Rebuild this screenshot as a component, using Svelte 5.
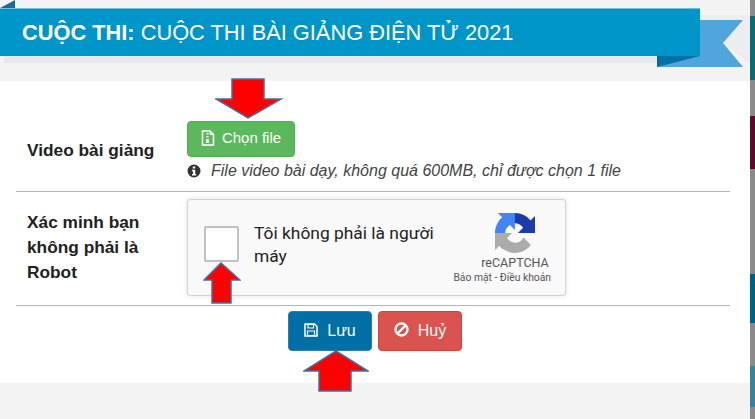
<script lang="ts">
  const segments = [
    { top: 16, height: 64, color: '#0f6a70' },
    { top: 36, height: 53, color: '#5a0a2c' },
    { top: 105, height: 49, color: '#00607f' },
    { top: 43, height: 41, color: '#3c8196' },
  ]
</script>

<div class="page">
  <main class="modal">
    <header class="head">
      <span class="corner"></span>
      <svg class="tail" width="93" height="52" viewBox="0 0 93 52" aria-hidden="true">
        <path d="M43 0H93V49L66 28 86 5H43Z" fill="#ecedee" />
        <path d="M0 5H86L66 28 86 52H0Z" fill="#4fa5dc" />
        <path d="M0 41H43L0 52Z" fill="#0070a8" />
      </svg>
      <div class="ribbon">
        <h1><b>CUỘC THI:</b> CUỘC THI BÀI GIẢNG ĐIỆN TỬ 2021</h1>
      </div>
      <div class="ribbon-shadow"></div>
    </header>

    <section class="body">
      <div class="row first">
        <div class="label">Video bài giảng</div>
        <div class="field">
          <button class="btn upload" type="button">
            <svg width="14" height="16" viewBox="0 0 14 16" aria-hidden="true">
              <path d="M1.5 1H9L12.500 4.500V15H1.500Z" fill="none" stroke="#fff" stroke-width="1.500" />
              <path d="M9 1V4.500H12.500" fill="none" stroke="#fff" stroke-width="1" />
              <path d="M5.500 3h2v1.500h-2zM5.500 6h2v1.500h-2zM5.200 9h2.600v4h-2.600z" fill="#fff" />
            </svg>
            Chọn file
          </button>
          <p class="hint">
            <svg width="14" height="14" viewBox="0 0 14 14" aria-hidden="true">
              <circle cx="7" cy="7" r="6.500" fill="#333" />
              <rect x="5.800" y="2.500" width="2.400" height="2" fill="#fff" />
              <path d="M5 5.800H8.200V10H9.200V11.500H5V10H6V7.200H5Z" fill="#fff" />
            </svg>
            <em>File video bài dạy, không quá 600MB, chỉ được chọn 1 file</em>
          </p>
        </div>
      </div>

      <div class="row second">
        <div class="label">Xác minh bạn không phải là Robot</div>
        <div class="captcha">
          <span class="check"></span>
          <span class="captcha-text">Tôi không phải là người máy</span>
          <div class="brand">
            <svg width="40" height="40" viewBox="0 0 64 64" aria-hidden="true">
              <path d="M64 31.955l-.033-1.37V4.687l-7.160 7.160C50.948 4.674 42.033.093 32.050.093c-10.400 0-19.622 4.960-25.458 12.640l11.736 11.860a15.550 15.550 0 0 1 4.754-5.334c2.050-1.600 4.952-2.906 8.968-2.906.485 0 .860.057 1.135.163 4.976.393 9.288 3.140 11.828 7.124l-8.307 8.307 26.295.008" fill="#1c3aa9" />
              <path d="M31.862.002l-1.370.033H4.594l7.160 7.160C4.580 13.054 0 21.970 0 31.953c0 10.400 4.960 19.622 12.640 25.458l11.860-11.736a15.550 15.550 0 0 1-5.334-4.754c-1.600-2.050-2.906-4.952-2.906-8.968 0-.485.057-.860.163-1.135.393-4.976 3.140-9.288 7.124-11.828l8.307 8.307.008-26.295" fill="#4285f4" />
              <path d="M.002 31.953l.033 1.370v25.898l7.160-7.160c5.860 7.173 14.775 11.754 24.760 11.754 10.400 0 19.622-4.960 25.458-12.640l-11.736-11.860a15.550 15.550 0 0 1-4.754 5.334c-2.050 1.600-4.952 2.906-8.968 2.906-.485 0-.860-.057-1.135-.163-4.976-.393-9.288-3.140-11.828-7.124l8.307-8.307-26.295-.008" fill="#ababab" />
            </svg>
            <span class="brand-name">reCAPTCHA</span>
            <span class="brand-links">Bảo mật - Điều khoản</span>
          </div>
        </div>
      </div>

      <div class="actions">
        <button class="btn save" type="button">
          <svg width="14" height="14" viewBox="0 0 14 14" aria-hidden="true">
            <path d="M1 1H10.500L13 3.500V13H1Z" fill="none" stroke="#fff" stroke-width="1.500" />
            <path d="M4 1.500H9.500V5H4ZM3.500 8H10.500V12.500H3.500Z" fill="none" stroke="#fff" stroke-width="1.200" />
          </svg>
          Lưu
        </button>
        <button class="btn cancel" type="button">
          <svg width="15" height="15" viewBox="0 0 15 15" aria-hidden="true">
            <circle cx="7.500" cy="7.500" r="6" fill="none" stroke="#fff" stroke-width="2.400" />
            <path d="M3.500 11.500L11.500 3.500" stroke="#fff" stroke-width="2.400" />
          </svg>
          Huỷ
        </button>
      </div>
    </section>

    <!-- red arrows painted over the screenshot -->
    <svg class="arrow a1" width="68" height="42" viewBox="0 0 68 42" aria-hidden="true">
      <path d="M17 1H49V21H66L33 40 1 21H17Z" fill="#f00" stroke="#41719c" stroke-width="1.500" />
    </svg>
    <svg class="arrow a2" width="38" height="42" viewBox="0 0 38 42" aria-hidden="true">
      <path d="M18 1L37 18H28V41H9V18H1Z" fill="#f00" stroke="#41719c" stroke-width="1.500" />
    </svg>
    <svg class="arrow a3" width="66" height="42" viewBox="0 0 66 42" aria-hidden="true">
      <path d="M33 1L65 21H48V41H16V21H1Z" fill="#f00" stroke="#41719c" stroke-width="1.500" />
    </svg>
  </main>

  <aside class="strip">
    {#each segments as s}
      <span style="margin-top: {s.top}px; height: {s.height}px; background: {s.color}"></span>
    {/each}
  </aside>
</div>

<style>
  :global(body) {
    margin: 0;
    overflow: hidden;
  }

  .page {
    display: flex;
    height: 419px;
    font-family: "Liberation Sans", Arial, sans-serif;
    color: #333;
  }

  .modal {
    position: relative;
    width: 750px;
    background: #f3f3f4;
  }

  /* ── Header ribbon ── */
  .head {
    position: relative;
    height: 81px;
    padding-top: 8px;
    box-sizing: border-box;
  }

  .corner {
    position: absolute;
    left: 0;
    top: 0;
    border-style: solid;
    border-width: 0 0 8px 15px;
    border-color: transparent transparent #1c6a95 transparent;
  }

  .tail {
    position: absolute;
    left: 657px;
    top: 15px;
  }

  .ribbon {
    position: relative;
    width: 700px;
    height: 48px;
    box-sizing: border-box;
    background: #0095c8;
    border-top: 1px solid #6cc0de;
    display: flex;
    align-items: center;
    padding-left: 22px;
  }

  .ribbon h1 {
    margin: 0;
    font-size: 21.8px;
    font-weight: 400;
    color: #fff;
    white-space: nowrap;
  }

  .ribbon-shadow {
    width: 653px;
    height: 7px;
    margin-left: 4px;
    background: #e8e9eb;
  }

  /* ── Body ── */
  .body {
    background: #fff;
    height: 302px;
    box-sizing: border-box;
    padding: 0 20px 0 16px;
  }

  .row {
    display: grid;
    grid-template-columns: 171px 1fr;
    border-bottom: 1px solid #b5b5b5;
    box-sizing: border-box;
  }

  .row.first {
    height: 111px;
    padding-top: 40px;
  }

  .row.second {
    height: 114px;
    padding-top: 7px;
  }

  .label {
    padding-left: 11px;
    font-size: 17.3px;
    font-weight: 700;
    line-height: 25px;
    color: #222;
  }

  .first .label {
    padding-top: 17px;
  }

  .second .label {
    padding-top: 11px;
    width: 130px;
  }

  .btn {
    display: inline-flex;
    align-items: center;
    justify-content: center;
    box-sizing: border-box;
    border: 1px solid transparent;
    border-radius: 4px;
    color: #fff;
    font: inherit;
    padding: 0;
  }

  .upload {
    width: 108px;
    height: 36px;
    gap: 7px;
    padding-bottom: 3px;
    font-size: 15px;
    background: #5cb85c;
    border-color: #4cae4c;
  }

  .hint {
    margin: 6px 0 0;
    display: flex;
    align-items: center;
    gap: 10px;
    font-size: 16px;
    line-height: 16px;
    color: #444;
    white-space: nowrap;
  }

  .captcha {
    position: relative;
    width: 379px;
    height: 97px;
    box-sizing: border-box;
    display: flex;
    align-items: flex-start;
    background: #f9f9f9;
    border: 1px solid #d3d3d3;
    border-radius: 3px;
    box-shadow: 0 0 4px 1px rgba(0, 0, 0, 0.08);
    font-family: Roboto, sans-serif;
  }

  .check {
    width: 35px;
    height: 36px;
    margin: 26px 0 0 16px;
    box-sizing: border-box;
    background: #fff;
    border: 2px solid #c1c1c1;
    border-radius: 2px;
    flex: none;
  }

  .captcha-text {
    width: 200px;
    margin: 22px 0 0 15px;
    font-size: 17.4px;
    line-height: 23px;
    color: #222;
  }

  .brand {
    position: absolute;
    right: 0;
    top: 13px;
    width: 100px;
    display: flex;
    flex-direction: column;
    align-items: center;
    color: #555;
  }

  .brand-name {
    font-size: 12.5px;
    line-height: 14px;
    margin-top: 3px;
  }

  .brand-links {
    font-size: 10.3px;
    line-height: 12px;
    margin-top: 2px;
    align-self: flex-end;
    margin-right: 14px;
    white-space: nowrap;
  }

  .actions {
    display: flex;
    justify-content: center;
    gap: 6px;
    padding: 5px 0 0 4px;
  }

  .save,
  .cancel {
    width: 84px;
    height: 40px;
    gap: 9px;
    font-size: 16px;
  }

  .actions svg {
    margin-top: -3px;
  }

  .save {
    background: #006fa6;
    border-color: #2a7fb0;
  }

  .cancel {
    background: #d9534f;
    border-color: #d43f3a;
  }

  /* ── Overlays ── */
  .arrow {
    position: absolute;
  }

  .a1 {
    left: 215px;
    top: 78px;
  }

  .a2 {
    left: 203px;
    top: 262px;
  }

  .a3 {
    left: 303px;
    top: 350px;
  }

  /* ── Page behind the modal ── */
  .strip {
    width: 5px;
    background: #8a8a8a;
    display: flex;
    flex-direction: column;
  }

  .strip span {
    display: block;
    flex: none;
  }
</style>
